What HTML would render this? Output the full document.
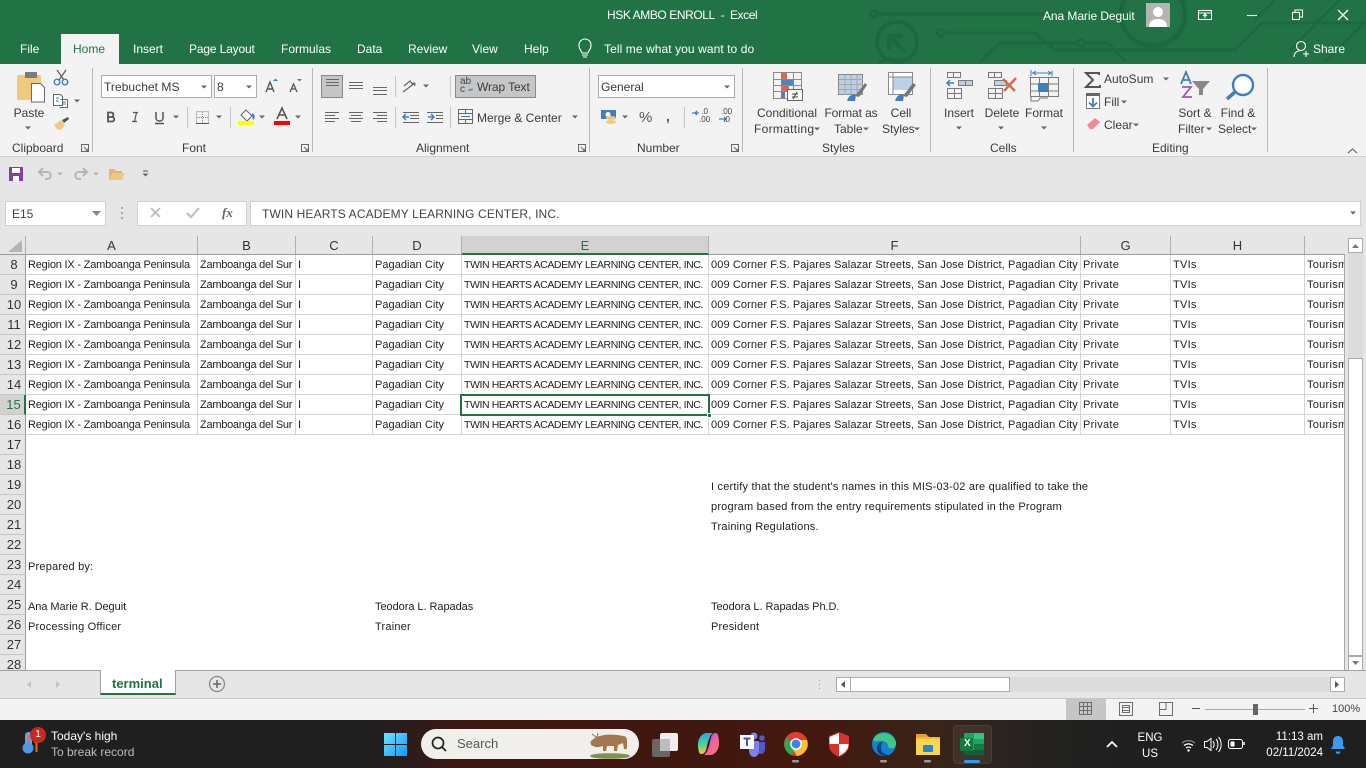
<!DOCTYPE html>
<html><head><meta charset="utf-8"><title>HSK AMBO ENROLL - Excel</title>
<style>
*{box-sizing:border-box}
html,body{margin:0;padding:0;width:1366px;height:768px;overflow:hidden;background:#e6e6e6;font-family:"Liberation Sans",sans-serif}
.b{position:absolute}
.t{position:absolute;white-space:nowrap;line-height:16px;font-size:12px;color:#333}
.w{color:#fff}
.c{transform:translateX(-50%)}
.rb{font-size:12px;color:#3a3a3a}
#grid{position:absolute;left:26px;top:255px;width:1319px;height:415px;background:#fff;overflow:hidden;border-right:1px solid #a8a8a8}
.r{position:absolute;left:0;width:1319px;height:20px;border-bottom:1px solid #d4d4d4}
.r.n{border-bottom:0}
.r span{position:absolute;top:2px;line-height:17px;font-size:11px;letter-spacing:.27px;color:#222;white-space:nowrap}
.a{left:2px}.bb{left:174px}.cc{left:272px}.d{left:349px}.e{left:438px}.f{left:685px}.g{left:1057px}.h{left:1147px}.i{left:1281px}
.r span.a{letter-spacing:-.2px}
.r span.bb{letter-spacing:-.26px}
.r span.d{letter-spacing:.04px}
.r span.e{font-size:10.5px;letter-spacing:-.41px}
.r span.f{letter-spacing:.11px}
.r.n span{top:4px;letter-spacing:.2px}
.r.n span.a,.r.n span.d,.r.n span.f{letter-spacing:.2px}
.r.n span.m{letter-spacing:-.05px}
.v{position:absolute;top:0;width:1px;height:180px;background:#d4d4d4}
.hc{position:absolute;top:236px;height:19px;border-right:1px solid #b0b0b0;border-bottom:1px solid #9b9b9b;text-align:center;font-size:13px;line-height:20px;color:#333;background:#e6e6e6}
.rh{position:absolute;left:0;width:26px;height:20px;border-right:1px solid #9b9b9b;border-bottom:1px solid #c6c6c6;text-align:center;font-size:13px;line-height:20px;color:#333;background:#e6e6e6;padding-left:3px;overflow:hidden}
svg{position:absolute;left:0;top:0;pointer-events:none}
</style></head><body>
<div class="b" style="left:0;top:0;width:1366px;height:64px;background:#217346"></div>
<div class="b" style="left:61px;top:34px;width:58px;height:31px;background:#f3f3f3"></div>
<div class="b" style="left:0;top:64px;width:1366px;height:93px;background:#f3f3f3;border-bottom:1px solid #d0d0d0"></div>
<div class="b" style="left:101px;top:75px;width:111px;height:23px;background:#fff;border:1px solid #ababab"></div>
<div class="b" style="left:214px;top:75px;width:43px;height:23px;background:#fff;border:1px solid #ababab"></div>
<div class="b" style="left:321px;top:75px;width:22px;height:23px;background:#c6c6c6;border:1px solid #8a8a8a"></div>
<div class="b" style="left:455px;top:75px;width:81px;height:23px;background:#c6c6c6;border:1px solid #8a8a8a"></div>
<div class="b" style="left:598px;top:75px;width:137px;height:23px;background:#fff;border:1px solid #ababab"></div>
<div class="b" style="left:5px;top:201px;width:101px;height:25px;background:#fff;border:1px solid #d0d0d0"></div>
<div class="b" style="left:137px;top:201px;width:110px;height:25px;background:#fff;border:1px solid #d0d0d0"></div>
<div class="b" style="left:250px;top:201px;width:1111px;height:25px;background:#fff;border:1px solid #d0d0d0"></div>

<div class="hc" style="left:0;width:26px"></div>
<div class="hc" style="left:26px;width:172px">A</div>
<div class="hc" style="left:198px;width:98px">B</div>
<div class="hc" style="left:296px;width:77px">C</div>
<div class="hc" style="left:373px;width:89px">D</div>
<div class="hc" style="left:462px;width:247px;background:#d2d2d2;color:#217346;border-bottom:2px solid #217346">E</div>
<div class="hc" style="left:709px;width:372px">F</div>
<div class="hc" style="left:1081px;width:90px">G</div>
<div class="hc" style="left:1171px;width:134px">H</div>
<div class="hc" style="left:1305px;width:40px;border-right:0"></div>

<div class="rh" style="top:255px">8</div><div class="rh" style="top:275px">9</div><div class="rh" style="top:295px">10</div><div class="rh" style="top:315px">11</div><div class="rh" style="top:335px">12</div><div class="rh" style="top:355px">13</div><div class="rh" style="top:375px">14</div>
<div class="rh" style="top:395px;background:#d2d2d2;color:#217346;border-right:2px solid #217346">15</div>
<div class="rh" style="top:415px">16</div><div class="rh" style="top:435px">17</div><div class="rh" style="top:455px">18</div><div class="rh" style="top:475px">19</div><div class="rh" style="top:495px">20</div><div class="rh" style="top:515px">21</div><div class="rh" style="top:535px">22</div><div class="rh" style="top:555px">23</div><div class="rh" style="top:575px">24</div><div class="rh" style="top:595px">25</div><div class="rh" style="top:615px">26</div><div class="rh" style="top:635px">27</div><div class="rh" style="top:655px;height:15px;border-bottom:0">28</div>

<div id="grid">
<div class="r" style="top:0"><span class="a">Region IX - Zamboanga Peninsula</span><span class="bb">Zamboanga del Sur</span><span class="cc">I</span><span class="d">Pagadian City</span><span class="e">TWIN HEARTS ACADEMY LEARNING CENTER, INC.</span><span class="f">009 Corner F.S. Pajares Salazar Streets, San Jose District, Pagadian City</span><span class="g">Private</span><span class="h">TVIs</span><span class="i">Tourism</span></div>
<div class="r" style="top:20px"><span class="a">Region IX - Zamboanga Peninsula</span><span class="bb">Zamboanga del Sur</span><span class="cc">I</span><span class="d">Pagadian City</span><span class="e">TWIN HEARTS ACADEMY LEARNING CENTER, INC.</span><span class="f">009 Corner F.S. Pajares Salazar Streets, San Jose District, Pagadian City</span><span class="g">Private</span><span class="h">TVIs</span><span class="i">Tourism</span></div>
<div class="r" style="top:40px"><span class="a">Region IX - Zamboanga Peninsula</span><span class="bb">Zamboanga del Sur</span><span class="cc">I</span><span class="d">Pagadian City</span><span class="e">TWIN HEARTS ACADEMY LEARNING CENTER, INC.</span><span class="f">009 Corner F.S. Pajares Salazar Streets, San Jose District, Pagadian City</span><span class="g">Private</span><span class="h">TVIs</span><span class="i">Tourism</span></div>
<div class="r" style="top:60px"><span class="a">Region IX - Zamboanga Peninsula</span><span class="bb">Zamboanga del Sur</span><span class="cc">I</span><span class="d">Pagadian City</span><span class="e">TWIN HEARTS ACADEMY LEARNING CENTER, INC.</span><span class="f">009 Corner F.S. Pajares Salazar Streets, San Jose District, Pagadian City</span><span class="g">Private</span><span class="h">TVIs</span><span class="i">Tourism</span></div>
<div class="r" style="top:80px"><span class="a">Region IX - Zamboanga Peninsula</span><span class="bb">Zamboanga del Sur</span><span class="cc">I</span><span class="d">Pagadian City</span><span class="e">TWIN HEARTS ACADEMY LEARNING CENTER, INC.</span><span class="f">009 Corner F.S. Pajares Salazar Streets, San Jose District, Pagadian City</span><span class="g">Private</span><span class="h">TVIs</span><span class="i">Tourism</span></div>
<div class="r" style="top:100px"><span class="a">Region IX - Zamboanga Peninsula</span><span class="bb">Zamboanga del Sur</span><span class="cc">I</span><span class="d">Pagadian City</span><span class="e">TWIN HEARTS ACADEMY LEARNING CENTER, INC.</span><span class="f">009 Corner F.S. Pajares Salazar Streets, San Jose District, Pagadian City</span><span class="g">Private</span><span class="h">TVIs</span><span class="i">Tourism</span></div>
<div class="r" style="top:120px"><span class="a">Region IX - Zamboanga Peninsula</span><span class="bb">Zamboanga del Sur</span><span class="cc">I</span><span class="d">Pagadian City</span><span class="e">TWIN HEARTS ACADEMY LEARNING CENTER, INC.</span><span class="f">009 Corner F.S. Pajares Salazar Streets, San Jose District, Pagadian City</span><span class="g">Private</span><span class="h">TVIs</span><span class="i">Tourism</span></div>
<div class="r" style="top:140px"><span class="a">Region IX - Zamboanga Peninsula</span><span class="bb">Zamboanga del Sur</span><span class="cc">I</span><span class="d">Pagadian City</span><span class="e">TWIN HEARTS ACADEMY LEARNING CENTER, INC.</span><span class="f">009 Corner F.S. Pajares Salazar Streets, San Jose District, Pagadian City</span><span class="g">Private</span><span class="h">TVIs</span><span class="i">Tourism</span></div>
<div class="r" style="top:160px"><span class="a">Region IX - Zamboanga Peninsula</span><span class="bb">Zamboanga del Sur</span><span class="cc">I</span><span class="d">Pagadian City</span><span class="e">TWIN HEARTS ACADEMY LEARNING CENTER, INC.</span><span class="f">009 Corner F.S. Pajares Salazar Streets, San Jose District, Pagadian City</span><span class="g">Private</span><span class="h">TVIs</span><span class="i">Tourism</span></div>
<div class="v" style="left:171px"></div><div class="v" style="left:269px"></div><div class="v" style="left:346px"></div><div class="v" style="left:435px"></div><div class="v" style="left:682px"></div><div class="v" style="left:1054px"></div><div class="v" style="left:1144px"></div><div class="v" style="left:1278px"></div>
<div class="r n" style="top:220px"><span class="f">I certify that the student's names in this MIS-03-02 are qualified to take the</span></div>
<div class="r n" style="top:240px"><span class="f">program based from the entry requirements stipulated in the Program</span></div>
<div class="r n" style="top:260px"><span class="f">Training Regulations.</span></div>
<div class="r n" style="top:300px"><span class="a">Prepared by:</span></div>
<div class="r n" style="top:340px"><span class="a m">Ana Marie R. Deguit</span><span class="d m">Teodora L. Rapadas</span><span class="f m">Teodora L. Rapadas Ph.D.</span></div>
<div class="r n" style="top:360px"><span class="a">Processing Officer</span><span class="d">Trainer</span><span class="f">President</span></div>
<div class="b" style="left:434px;top:139px;width:250px;height:22px;border:2px solid #217346"></div>
<div class="b" style="left:681px;top:158px;width:5px;height:5px;background:#217346;border:1px solid #fff"></div>
</div>

<div class="b" style="left:1348px;top:238px;width:15px;height:432px;background:#dcdcdc"></div>
<div class="b" style="left:1348px;top:238px;width:15px;height:15px;background:#fff;border:1px solid #ababab"></div>
<div class="b" style="left:1348px;top:358px;width:15px;height:298px;background:#fff;border:1px solid #ababab"></div>
<div class="b" style="left:1348px;top:656px;width:15px;height:15px;background:#fff;border:1px solid #ababab"></div>
<div class="b" style="left:0;top:670px;width:1366px;height:29px;background:#e6e6e6;border-top:1px solid #a0a0a0;border-bottom:1px solid #c6c6c6"></div>
<div class="b" style="left:100px;top:670px;width:76px;height:25px;background:#fff;border:1px solid #a0a0a0;border-top:0;border-bottom:2px solid #217346"></div>
<div class="b" style="left:836px;top:677px;width:494px;height:15px;background:#dcdcdc"></div>
<div class="b" style="left:836px;top:677px;width:15px;height:15px;background:#fff;border:1px solid #ababab"></div>
<div class="b" style="left:850px;top:677px;width:160px;height:15px;background:#fff;border:1px solid #ababab"></div>
<div class="b" style="left:1330px;top:677px;width:15px;height:15px;background:#fff;border:1px solid #ababab"></div>
<div class="b" style="left:0;top:699px;width:1366px;height:21px;background:#f3f3f3"></div>
<div class="b" style="left:1066px;top:699px;width:40px;height:21px;background:#c6c6c6"></div>
<div class="b" style="left:0;top:720px;width:1366px;height:48px;background:linear-gradient(90deg,#1f1f1f 0,#1f1f1f 27%,#3f1812 34%,#42180f 60%,#3a2418 68%,#242321 76%,#1f1f1f 82%,#1f1f1f 100%)"></div>
<div class="b" style="left:953px;top:725px;width:39px;height:39px;background:#ffffff12;border-radius:4px;border:1px solid #ffffff10"></div>
<div class="b" style="left:421px;top:729px;width:218px;height:30px;background:#f1efec;border-radius:15px"></div>

<svg width="1366" height="768" viewBox="0 0 1366 768" fill="none">
<defs><path id="k" d="M-3-1.5h6l-3 3z" fill="#666"/></defs>
<!-- title circuit -->
<g stroke="#1b6a3f" stroke-width="3">
<path d="M878 14H1125"/><circle cx="874" cy="14" r="3.5"/>
<circle cx="897" cy="42" r="20" stroke-width="4"/><path d="M889 50V36h14M889 36l16 16" stroke-width="4"/>
<path d="M945 33h90l20 17h180l27-27h104"/><circle cx="941" cy="33" r="3.5"/><circle cx="1081" cy="43" r="3.5"/>
<path d="M1084 43h24l18 19M1078 43H1000l-20 19M878 62l10-2h14"/>
<circle cx="1153" cy="14" r="32" stroke-width="5"/>
<path d="M1325 62l41-41M1275 0l-20 20M1340 0l-50 50"/>
</g>
<!-- bulb -->
<g stroke="#fff" stroke-width="1.1"><path d="M582 53c0-2-3-3-3-8a6 6 0 0 1 12 0c0 5-3 6-3 8z"/><path d="M582 55h6M583 57h4"/></g>
<!-- window controls -->
<g stroke="#fff" stroke-width="1.1">
<rect x="1198.5" y="10.5" width="13" height="9"/><path d="M1199 13h12M1205 18v-3.5M1203 16l2-2 2 2"/>
<path d="M1247 15.500h10"/><rect x="1292.500" y="12.500" width="7" height="7"/><path d="M1295 12v-2h7.500v7h-3"/>
<path d="M1338 10l10 10M1348 10l-10 10" stroke-width="1.3"/>
<circle cx="1301" cy="46" r="4.500"/><path d="M1294 57c0-4 3-6 6-6.500M1303 54h6M1306 51v6"/>
</g>
<rect x="1146" y="3" width="24" height="24" fill="#b3b3b3"/><circle cx="1158" cy="12" r="5" fill="#fff"/><path d="M1149 27c0-6 4-8 9-8s9 2 9 8z" fill="#fff"/>
<!-- paste -->
<rect x="17" y="75" width="24" height="25" rx="1" fill="#f0c87e"/><rect x="25" y="72" width="12" height="6" fill="#7b7b7b"/>
<path d="M31.500 83.500h9l4 4v14.500h-13z" fill="#fff" stroke="#6a6a6a"/>
<use href="#k" x="28" y="128"/>
<g stroke="#5b5b5b" stroke-width="1.2"><path d="M57 70l7 10M66 70l-7 10"/></g>
<circle cx="57" cy="82" r="2.800" stroke="#3f7fbf" stroke-width="1.400"/><circle cx="65" cy="82" r="2.800" stroke="#3f7fbf" stroke-width="1.400"/>
<path d="M53.500 94.500h7l2 2v9h-9zM60.500 99.500h7v8h-8" stroke="#666" fill="#fff"/><path d="M56 98h3M56 101h3M62 102h4M62 104h4" stroke="#3f7fbf"/>
<use href="#k" x="77" y="101"/>
<path d="M54 125l7-5 4 5-4 5-4-1z" fill="#f0c87e"/><path d="M62 120l6-3 1 2-5 4z" fill="#555"/>
<!-- launcher -->
<g stroke="#666"><path d="M81.500 144.500h7v7h-7zM84 147l4 4M88 148.500v2.500h-2.500"/><path d="M301.500 144.500h7v7h-7zM304 147l4 4M308 148.500v2.500h-2.500"/><path d="M578.500 144.500h7v7h-7zM581 147l4 4M585 148.500v2.500h-2.500"/><path d="M731.500 144.500h7v7h-7zM734 147l4 4M738 148.500v2.500h-2.500"/></g>
<!-- seps -->
<g stroke="#b9b9b9"><path d="M92.500 68v84M312.500 68v84M589.500 68v84M742.500 68v84M930.500 68v84M1073.500 68v84M1267.500 68v84"/></g>
<g stroke="#c6c6c6"><path d="M187.500 107v21M230.500 107v21M395.500 76v21M395.500 107v21M450.500 76v21M450.500 107v21M684.500 107v21"/></g>
<!-- carets -->
<use href="#k" x="204" y="87"/><use href="#k" x="249" y="87"/><use href="#k" x="176" y="117"/><use href="#k" x="219" y="117"/><use href="#k" x="262" y="117"/><use href="#k" x="298" y="117"/><use href="#k" x="426" y="86"/><use href="#k" x="575" y="117"/><use href="#k" x="727" y="87"/><use href="#k" x="625" y="117"/><use href="#k" x="817" y="129"/><use href="#k" x="866" y="129"/><use href="#k" x="917" y="129"/><use href="#k" x="959" y="128"/><use href="#k" x="1001" y="128"/><use href="#k" x="1044" y="128"/><use href="#k" x="1166" y="79"/><use href="#k" x="1124" y="102"/><use href="#k" x="1136" y="125"/><use href="#k" x="1209" y="129"/><use href="#k" x="1254" y="129"/>
<path d="M92 211h9l-4.500 5z" fill="#888"/>
<use href="#k" x="1353" y="213"/>
<!-- grow/shrink -->
<path d="M266 92l4-10 4 10M268 89h5" stroke="#555" stroke-width="1.400"/><path d="M273 81l2.500-2.500 2.500 2.500z" fill="#3f7fbf"/>
<path d="M290 92l3.500-8 3.500 8M291.500 89h4" stroke="#555" stroke-width="1.300"/><path d="M297 79l2.500 2.500 2.500-2.500z" fill="#3f7fbf"/>
<!-- B I U -->
<path d="M108 112.500v9h4c3 0 3-4.500 0-4.500h-4 3.500c2.500 0 2.500-4.500 0-4.500z" stroke="#555" stroke-width="1.800"/>
<path d="M133 112.500h5M132 121.500h5M136.500 112.500l-2 9" stroke="#555" stroke-width="1.200"/>
<path d="M156 112v6c0 4 7 4 7 0v-6M155 123.500h9" stroke="#555" stroke-width="1.500"/>
<path d="M196.500 111.500h12v12h-12zM202.500 112v12M197 117.500h12" stroke="#888" stroke-dasharray="1 1"/><path d="M196 123.500h13" stroke="#555"/>
<!-- fill -->
<path d="M241 115l5-5 6 6-5 5z" fill="#fff" stroke="#666"/><path d="M252 114c2 1 2 4 1 5" stroke="#3f7fbf" stroke-width="2"/><rect x="238" y="121" width="16" height="4" fill="#ffff00"/>
<path d="M277 119l5-11 5 11M279 115h6" stroke="#555" stroke-width="1.600"/><rect x="274" y="121" width="16" height="4" fill="#ff0000"/>
<!-- align -->
<g stroke="#666"><path d="M326 79.500h13M326 82.500h13M326 85.500h13"/><path d="M349 82.500h14M349 85.500h14M349 88.500h14" /><path d="M373 87.500h14M373 90.500h14M373 94.500h14"/>
<path d="M325 112.500h14M325 115.500h10M325 118.500h14M325 121.500h10M349 112.500h14M351 115.500h10M349 118.500h14M351 121.500h10M373 112.500h14M377 115.500h10M373 118.500h14M377 121.500h10"/>
<path d="M403 112.500h16M410 115.500h9M410 118.500h9M403 122.500h16M427 112.500h16M436 115.500h7M436 118.500h7M427 122.500h16"/>
<path d="M403 92l12-9M415 83l-3 .5M415 83l-.5 3M404 86l6-5 3 4" stroke-width="1.200"/></g>
<path d="M409 117h-6m3-3l-3 3 3 3M428 117h6m-3-3l3 3-3 3" stroke="#3f7fbf" stroke-width="1.500"/>
<!-- wrap -->
<path d="M472 88v2h-3l1-1" stroke="#3f7fbf"/>
<!-- merge -->
<path d="M458.500 109.500h14v14h-14zM459 113.500h13M459 119.500h13M465.500 110v3M465.500 120v3" stroke="#666"/><path d="M461 116.500h9" stroke="#3f7fbf"/>
<!-- number -->
<rect x="601" y="110" width="15" height="9" fill="#3f7fbf"/><circle cx="608" cy="114.500" r="2.500" fill="#fff"/><ellipse cx="611" cy="118" rx="5" ry="2" fill="#f0c87e"/><ellipse cx="611" cy="122" rx="5" ry="2" fill="#f0c87e"/>
<path d="M692 113h7m-2-2l-2 2 2 2M719 119h7m-2-2l2 2-2 2" stroke="#3f7fbf" stroke-width="1.300"/>
<!-- cond fmt -->
<g stroke="#8a8a8a"><path d="M773.500 72.500h28v26h-28zM781.500 72v26M793.500 72v26M774 79.500h27M774 85.500h27M774 91.500h27"/></g>
<rect x="781" y="73" width="6" height="6" fill="#d9694a"/><rect x="781" y="80" width="12" height="5" fill="#4a86c5"/><rect x="781" y="86" width="8" height="5" fill="#d9694a"/><rect x="781" y="92" width="4" height="6" fill="#4a86c5"/>
<rect x="787.500" y="89.500" width="15" height="11" fill="#fff" stroke="#666"/><path d="M792 94h6M792 97h6M797 92l-4 7" stroke="#444"/>
<!-- format table -->
<rect x="838.500" y="74.500" width="24" height="20" fill="#bcd0e8" stroke="#8a8a8a"/><path d="M839 79.500h24M839 84.500h24M839 89.500h24M845 75v20M851 75v20M857 75v20" stroke="#a8a8a8"/>
<path d="M847 101c2-6 5-7 9-6l-1 6z" fill="#3f7fbf"/><path d="M855 96l10-13 2 2-8 12z" fill="#777"/>
<rect x="888.500" y="72.500" width="24" height="22" fill="#fff" stroke="#8a8a8a"/><rect x="893" y="77" width="19" height="13" fill="#bcd0e8"/><path d="M889 77h24M893 73v22" stroke="#8a8a8a"/>
<path d="M895 101c2-6 5-7 9-6l-1 6z" fill="#3f7fbf"/><path d="M903 96l10-13 3 2-9 12z" fill="#777"/>
<!-- insert/delete/format -->
<g stroke="#7b7b7b"><path d="M947.500 72.500h6v5h-6zM953.500 72.500h7v5h-7zM947.500 88.500h14v10h-14zM954.500 89v9M948 93.500h13"/><path d="M958.500 80.500h14v5h-14z" fill="#bcd0e8"/><path d="M965.500 81v4"/>
<path d="M988.500 72.500h6v5h-6zM994.500 72.500h7v5h-7zM988.500 88.500h14v10h-14zM995.500 89v9M989 93.500h13"/><path d="M994.500 80.500h12v5h-12z" fill="#bcd0e8"/>
<path d="M1030.500 77.500h28v19h-28zM1039.500 78v18M1048.500 78v18M1031 84h27M1031 91h27"/><path d="M1031 96v5h7l2-3h7v-2" /></g>
<path d="M948 83h6m-4-3l-3 3 3 3" stroke="#3f7fbf" stroke-width="1.500"/>
<path d="M1003 79l12 12M1016 78l-12 13" stroke="#d9694a" stroke-width="2.400"/>
<rect x="1038" y="83" width="10" height="9" fill="#3f7fbf"/><path d="M1031 70v6M1052 70.500v6M1032 73h19m-3-2l3 2-3 2M1036 71l-3 2 3 2" stroke="#3f7fbf"/>
<!-- editing -->
<path d="M1099 75v-2h-13l7 7-7 7h14v-2" stroke="#555" stroke-width="2"/>
<rect x="1086.500" y="93.500" width="13" height="15" fill="#fff" stroke="#777"/><rect x="1086" y="93" width="14" height="3" fill="#666"/><path d="M1093 98v8m-4-3.500l4 4 4-4" stroke="#3f7fbf" stroke-width="1.800"/>
<path d="M1087 125l8-7 5 4-7 7h-3z" fill="#ee8a96"/>
<path d="M1181 84l5-12 5 12M1183 80h7" stroke="#3f7fbf" stroke-width="1.800"/><path d="M1182 87h9l-8 10h9" stroke="#9b59b6" stroke-width="1.800"/>
<path d="M1192 81h18l-7 8v6h-4v-6z" fill="#888"/>
<circle cx="1243" cy="85" r="10" stroke="#3f7fbf" stroke-width="2.400" fill="#fff"/><path d="M1235 92l-8 7" stroke="#3f7fbf" stroke-width="3.500"/>
<path d="M1348 153l4.500-4 4.500 4" stroke="#555"/>
<!-- QAT -->
<path d="M9 167h14v14H9z" fill="#8a3f9f"/><rect x="12" y="168" width="8" height="5" fill="#fff"/><rect x="13" y="176" width="6" height="5" fill="#fff"/>
<path d="M40 172h7c5 0 5 7 0 7h-2M43 168l-4 4 4 4" stroke="#b5b5b5" stroke-width="2"/><path d="M86 172h-7c-5 0-5 7 0 7h2M83 168l4 4-4 4" stroke="#b5b5b5" stroke-width="2"/>
<use href="#k" x="60" y="174" opacity=".4"/><use href="#k" x="96" y="174" opacity=".4"/>
<path d="M109 180v-11h5l2 2h6v2h-9z" fill="#e3b673"/><path d="M109 180l3-7h13l-3 7z" fill="#f0c87e"/>
<path d="M143 171h5" stroke="#555"/><use href="#k" x="145.500" y="175"/>
<!-- fx -->
<path d="M151 208l9 9M160 208l-9 9" stroke="#bcbcbc" stroke-width="1.800"/><path d="M187 213l4 4 8-9" stroke="#bcbcbc" stroke-width="2"/>
<g fill="#aaa"><rect x="121" y="207" width="2" height="2"/><rect x="121" y="212" width="2" height="2"/><rect x="121" y="217" width="2" height="2"/></g>
<path d="M8 252h14v-12z" fill="#b4b4b4"/>
<!-- scroll arrows -->
<path d="M1352 248h7l-3.500-4z" fill="#777"/><path d="M1352 661h7l-3.500 4z" fill="#777"/>
<path d="M845 681v7l-4-3.500z" fill="#555"/><path d="M1335 681v7l4-3.500z" fill="#555"/>
<path d="M31 681v7l-4-3.500z" fill="#c2c2c2"/><path d="M56 681v7l4-3.500z" fill="#c2c2c2"/>
<circle cx="217" cy="684" r="7.500" stroke="#8a8a8a" stroke-width="1.300"/><path d="M213 684h8M217 680v8" stroke="#666" stroke-width="1.500"/>
<path d="M819.500 680v1M819.500 684v1M819.500 688v1" stroke="#999"/>
<!-- status -->
<g stroke="#6e6e6e"><path d="M1079.500 702.500h12v12h-12zM1083.500 703v11M1087.500 703v11M1080 706.500h11M1080 710.500h11"/><path d="M1119.500 702.500h13v13h-13zM1122.500 705.500h7v7h-7zM1123 707.500h6M1123 710.500h6"/><path d="M1159.500 702.500h13v13h-13zM1160 709.500h6v-7"/></g>
<path d="M1192 708.500h8M1309 708.500h9M1313.500 704v9" stroke="#555"/><path d="M1205 709.500h100" stroke="#a8a8a8"/><rect x="1253" y="704" width="5" height="11" fill="#666"/>
<!-- weather -->
<rect x="25" y="732" width="7" height="16" rx="3.500" fill="#6f9fe0"/><rect x="27" y="735" width="3" height="12" fill="#e66b5b"/><circle cx="28" cy="748" r="5.500" fill="#4b9ae8"/><path d="M36.500 742v10M34 742h5" stroke="#e8651f" stroke-width="2"/>
<circle cx="38" cy="735" r="8" fill="#c42b1c"/>
<!-- win -->
<path d="M384 733h11v11h-11zM396 733h11v11h-11zM384 745h11v11h-11zM396 745h11v11h-11z" fill="url(#wg)"/>
<defs><linearGradient id="wg" x1="0" y1="0" x2="1" y2="1"><stop offset="0" stop-color="#6ce4ff"/><stop offset="1" stop-color="#1496ff"/></linearGradient>
<linearGradient id="cp" x1="0" y1="0" x2="1" y2="1"><stop offset="0" stop-color="#7a5cf0"/><stop offset=".5" stop-color="#f060b0"/><stop offset="1" stop-color="#f5803f"/></linearGradient>
<linearGradient id="cp2" x1="0" y1="0" x2="0" y2="1"><stop offset="0" stop-color="#2f9ff0"/><stop offset=".5" stop-color="#3fd09a"/><stop offset="1" stop-color="#f5c93f"/></linearGradient></defs>
<circle cx="438" cy="743" r="5.500" stroke="#222" stroke-width="1.700"/><path d="M442 747l4 4" stroke="#222" stroke-width="1.700"/>
<!-- ox -->
<path d="M596 737c8-3 18-3 27-1 3 0 4 2 4 5v8h-3l-1-6-5 2-1 6h-3v-5h-7l-1 5h-3v-5c-3 1-7 2-10 0-2 0-3-3-2-5z" fill="#a5764f"/><ellipse cx="610" cy="756" rx="20" ry="2.800" fill="#7e9250"/><path d="M592 734l4 3M598 733l-1 4" stroke="#777"/>
<!-- task view -->
<rect x="660" y="733" width="18" height="18" rx="2" fill="#eee"/><rect x="652" y="739" width="18" height="18" rx="2" fill="#6f6f6f" opacity=".9"/><rect x="660" y="739" width="10" height="12" fill="#bdbdbd"/>
<!-- copilot -->
<path d="M698 745c0-7 4-12 9-12h6c-3 2-5 8-6 13-1 5-2 8-6 8-2 0-3-4-3-9z" fill="url(#cp2)"/><path d="M719 743c0 7-4 12-9 12h-6c3-2 5-8 6-13 1-5 2-9 6-9 2 0 3 5 3 10z" fill="url(#cp)"/>
<!-- teams -->
<circle cx="754" cy="736" r="3.500" fill="#7b83eb"/><circle cx="762" cy="738" r="2.800" fill="#5059c9"/><path d="M749 741h10v10c0 4-3 6-5 6s-5-2-5-6z" fill="#7b83eb"/><path d="M759 742h6v7c0 3-2 5-4 5h-2z" fill="#5059c9"/><rect x="740" y="735" width="14" height="14" fill="#fff"/><path d="M743.500 738.500h7M747 738.500v7.500" stroke="#4b53bc" stroke-width="2"/>
<!-- chrome -->
<circle cx="796" cy="744" r="12" fill="#e33b2e"/><path d="M786 738a12 12 0 0 0 5.500 17.200L797 744z" fill="#2fa84f"/><path d="M796 740h11a12 12 0 0 1-10 16l-5-8z" fill="#fbc02d"/><circle cx="796" cy="744" r="5.800" fill="#fff"/><circle cx="796" cy="744" r="4.500" fill="#3f83f0"/>
<!-- shield -->
<path d="M839 732l10 4v9c0 6-4 9-10 12-6-3-10-6-10-12v-9z" fill="#d8322a"/><path d="M839 733v11h-9.500v-7zM839 744h9.500c0 6-4 9-9.500 12z" fill="#fff"/>
<!-- edge -->
<circle cx="884" cy="744" r="12" fill="#1581d0"/><path d="M873 740c3-9 19-10 23 2 1 6-5 8-8 5 1-4-4-7-9-6-3 .5-5 1-6-1z" fill="#3bc98a"/><path d="M883 742c-5 0-8 5-5 10 2 4 8 5 12 3-5 0-9-2-9-7 0-3 1-5 2-6z" fill="#0b3f82"/>
<!-- folder -->
<path d="M916 734h10l3 3h-13z" fill="#e0a030"/><rect x="916" y="737" width="24" height="18" fill="#fcd64f"/><path d="M916 737h24v2h-24z" fill="#f0b93a"/><rect x="923" y="745" width="10" height="7" rx="1" fill="#1e88d9"/>
<!-- excel -->
<rect x="964" y="733" width="20" height="22" rx="1.500" fill="#21a366"/><rect x="974" y="733" width="10" height="6" fill="#33c481"/><rect x="974" y="744" width="10" height="6" fill="#107c41"/><rect x="964" y="750" width="20" height="5" fill="#185c37"/><rect x="960" y="738" width="13" height="13" rx="1" fill="#107c41"/>
<!-- tray -->
<g fill="#999"><rect x="792" y="760" width="7" height="2.500" rx="1"/><rect x="880" y="760" width="7" height="2.500" rx="1"/><rect x="924" y="760" width="7" height="2.500" rx="1"/></g>
<rect x="964" y="760" width="16" height="3" rx="1.500" fill="#2b9bf4"/>
<path d="M1107 747l5-5 5 5" stroke="#fff" stroke-width="1.700"/>
<path d="M1182 743a10 10 0 0 1 13 0" stroke="#8a8a8a" stroke-width="1.300"/><path d="M1184 745.500a7 7 0 0 1 9 0M1186 748a4 4 0 0 1 5 0" stroke="#fff" stroke-width="1.300"/><circle cx="1188.500" cy="750.500" r="1.200" fill="#fff"/>
<path d="M1204.500 741.500h2.500l4-3v12l-4-3h-2.500z" stroke="#fff"/><path d="M1213 741c1.500 2 1.500 5 0 7M1216 739c2.500 3 2.500 8 0 11M1218.500 737c3.500 4 3.500 11 0 15" stroke="#fff"/>
<rect x="1228.500" y="739.500" width="14" height="9" rx="2" stroke="#fff"/><rect x="1230.500" y="741.500" width="4" height="5" fill="#fff"/><path d="M1244 742v3" stroke="#fff" stroke-width="1.500"/>
<path d="M1338 736c-3.500 0-5 2.500-5 5.500v4l-2 3.500h14l-2-3.500v-4c0-3-1.500-5.500-5-5.500zM1335.500 751.500h5a2.500 2.500 0 0 1-5 0z" fill="#3b9bef"/>
</svg>

<div class="t w" style="left:607px;top:7px;letter-spacing:-.42px">HSK AMBO ENROLL&nbsp; -&nbsp; Excel</div>
<div class="t w" style="left:1043px;top:8px;letter-spacing:-.07px">Ana Marie Deguit</div>
<div class="t w" style="left:20px;top:41px">File</div>
<div class="t" style="left:73px;top:41px;color:#217346">Home</div>
<div class="t w" style="left:133px;top:41px">Insert</div>
<div class="t w" style="left:189px;top:41px;letter-spacing:-.15px">Page Layout</div>
<div class="t w" style="left:281px;top:41px">Formulas</div>
<div class="t w" style="left:357px;top:41px">Data</div>
<div class="t w" style="left:408px;top:41px">Review</div>
<div class="t w" style="left:472px;top:41px">View</div>
<div class="t w" style="left:524px;top:41px">Help</div>
<div class="t w" style="left:604px;top:41px;letter-spacing:.08px">Tell me what you want to do</div>
<div class="t w" style="left:1313px;top:41px">Share</div>

<div class="t rb c" style="left:29px;top:105px">Paste</div>
<div class="t rb" style="left:104px;top:79px;letter-spacing:.05px">Trebuchet MS</div>
<div class="t rb" style="left:217px;top:79px">8</div>
<div class="t rb" style="left:477px;top:79px;letter-spacing:-.1px">Wrap Text</div>
<div class="t" style="left:460px;top:78px;font-size:10px;line-height:8px;color:#444;white-space:pre">ab
c</div>
<div class="t rb" style="left:477px;top:110px">Merge &amp; Center</div>
<div class="t rb" style="left:601px;top:79px">General</div>
<div class="t" style="left:639px;top:110px;font-size:15px;color:#555">%</div>
<div class="t" style="left:666px;top:108px;font-size:14px;font-weight:bold;color:#555">,</div>
<div class="t" style="left:699px;top:108px;font-size:8px;line-height:8px;color:#444;white-space:pre"> .0
.00</div>
<div class="t" style="left:721px;top:108px;font-size:8px;line-height:8px;color:#444;white-space:pre">.00
 .0</div>
<div class="t rb c" style="left:787px;top:105px">Conditional</div>
<div class="t rb" style="left:754px;top:121px;letter-spacing:.3px">Formatting</div>
<div class="t rb c" style="left:851px;top:105px;letter-spacing:-.1px">Format as</div>
<div class="t rb" style="left:834px;top:121px">Table</div>
<div class="t rb c" style="left:901px;top:105px">Cell</div>
<div class="t rb" style="left:882px;top:121px">Styles</div>
<div class="t rb c" style="left:959px;top:105px">Insert</div>
<div class="t rb c" style="left:1002px;top:105px">Delete</div>
<div class="t rb c" style="left:1044px;top:105px">Format</div>
<div class="t rb" style="left:1104px;top:71px">AutoSum</div>
<div class="t rb" style="left:1104px;top:94px">Fill</div>
<div class="t rb" style="left:1104px;top:117px">Clear</div>
<div class="t rb c" style="left:1195px;top:105px">Sort &amp;</div>
<div class="t rb" style="left:1178px;top:121px">Filter</div>
<div class="t rb c" style="left:1238px;top:105px">Find &amp;</div>
<div class="t rb" style="left:1218px;top:121px">Select</div>
<div class="t rb" style="left:12px;top:140px">Clipboard</div>
<div class="t rb" style="left:182px;top:140px">Font</div>
<div class="t rb" style="left:416px;top:140px">Alignment</div>
<div class="t rb" style="left:637px;top:140px">Number</div>
<div class="t rb" style="left:822px;top:140px">Styles</div>
<div class="t rb" style="left:990px;top:140px">Cells</div>
<div class="t rb" style="left:1152px;top:140px">Editing</div>

<div class="t" style="left:12px;top:206px;color:#444">E15</div>
<div class="t" style="left:222px;top:205px;font-family:'Liberation Serif',serif;font-style:italic;font-weight:bold;font-size:13px;color:#666">fx</div>
<div class="t" style="left:262px;top:206px;letter-spacing:.13px;color:#444">TWIN HEARTS ACADEMY LEARNING CENTER, INC.</div>
<div class="t" style="left:112px;top:676px;font-weight:bold;font-size:13px;color:#217346">terminal</div>
<div class="t" style="left:1332px;top:701px;font-size:11px;color:#444">100%</div>

<div class="t c w" style="left:38px;top:727px;font-size:10px">1</div>
<div class="t w" style="left:51px;top:728px;font-size:12px">Today's high</div>
<div class="t" style="left:51px;top:744px;font-size:12px;color:#bdbdbd">To break record</div>
<div class="t" style="left:457px;top:736px;font-size:13px;color:#555">Search</div>
<div class="t w c" style="left:1150px;top:730px;font-size:11.500px">ENG</div>
<div class="t w c" style="left:1150px;top:746px;font-size:11.500px">US</div>
<div class="t w" style="right:43px;top:729px;font-size:11.500px">11:13 am</div>
<div class="t w" style="right:43px;top:745px;font-size:11.500px">02/11/2024</div>
<div class="t" style="left:964px;top:738px;font-size:10px;font-weight:bold;color:#fff;line-height:12px">X</div>
</body></html>
